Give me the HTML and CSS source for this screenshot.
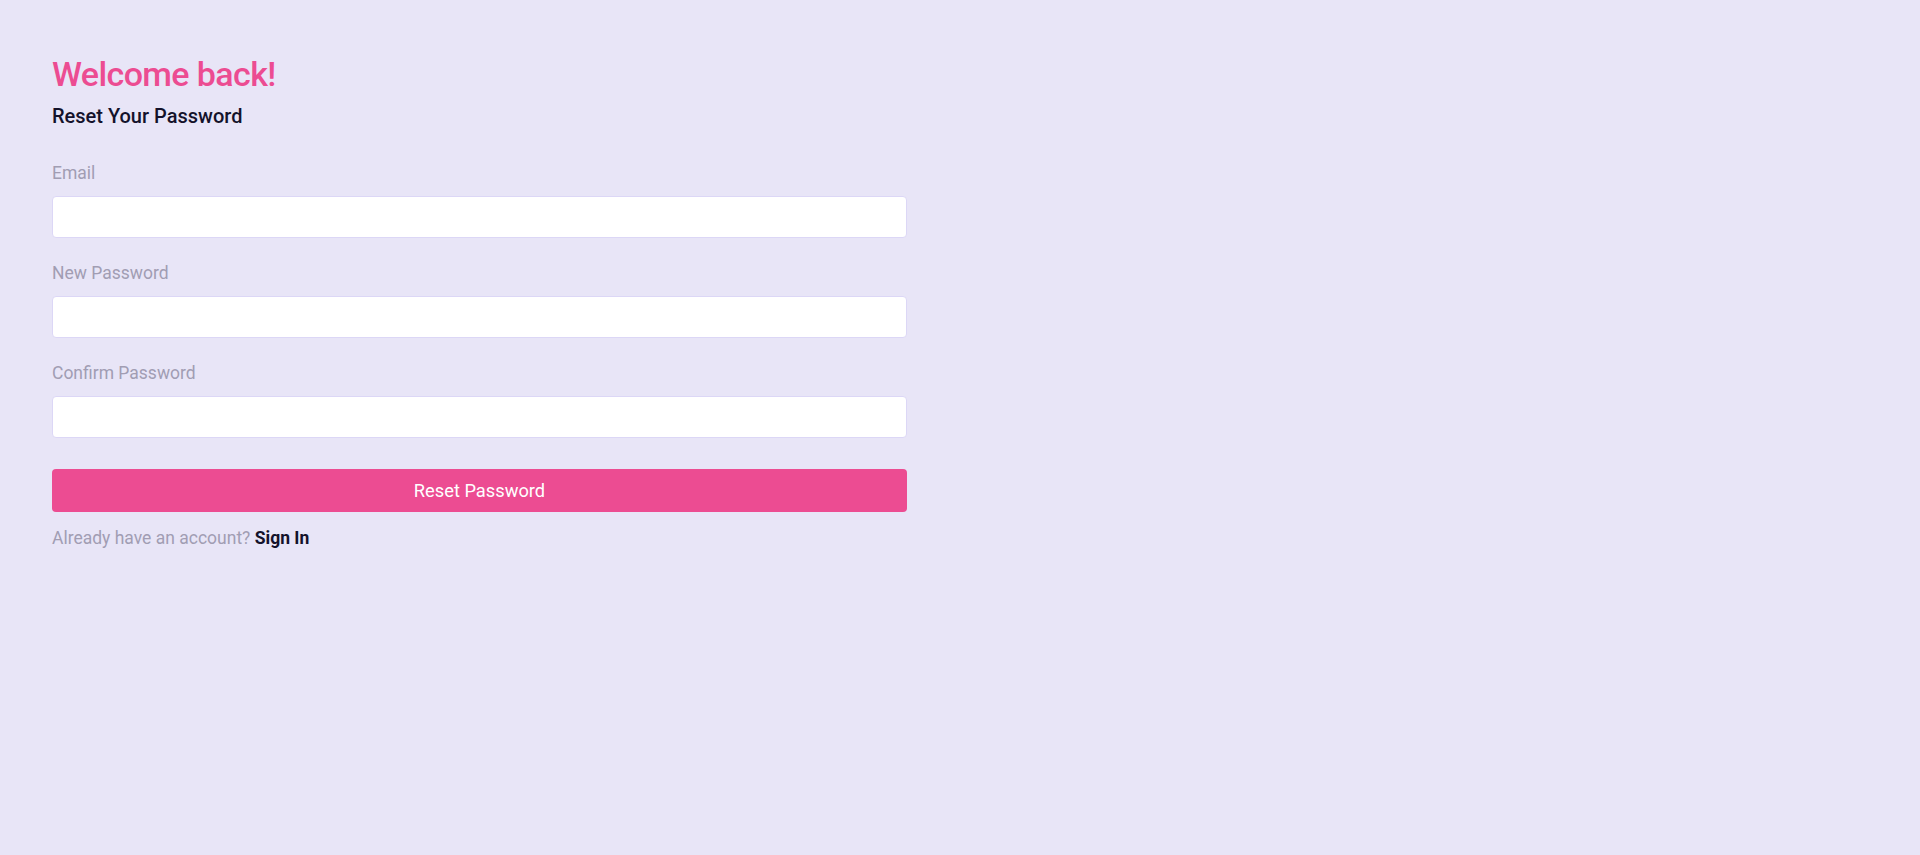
FILE: index.html
```html
<!DOCTYPE html>
<html lang="en">
<head>
<meta charset="utf-8">
<title>Reset Password</title>
<link rel="stylesheet" href="styles.css">
</head>
<body>
<main class="page">
  <form class="form">
    <h1 class="title">Welcome back!</h1>
    <h2 class="subtitle">Reset Your Password</h2>
    <div class="field">
      <label class="label" for="email">Email</label>
      <input class="input" id="email" type="email">
    </div>
    <div class="field">
      <label class="label" for="newpw">New Password</label>
      <input class="input" id="newpw" type="password">
    </div>
    <div class="field">
      <label class="label" for="confirmpw">Confirm Password</label>
      <input class="input" id="confirmpw" type="password">
    </div>
    <button class="button" type="button">Reset Password</button>
    <p class="footer">Already have an account? <a class="link" href="#">Sign In</a></p>
  </form>
</main>
</body>
</html>
```
FILE: styles.css
```css
html, body {
  margin: 0;
  padding: 0;
  height: 100%;
}
body {
  background: #e8e5f7;
  font-family: Roboto, "Liberation Sans", sans-serif;
}
.page {
  padding: 53px 52px 0;
}
.form {
  width: 855px;
  display: flex;
  flex-direction: column;
}
.title {
  margin: 0;
  font-size: 34px;
  line-height: 43px;
  font-weight: 500;
  color: #ec4c92;
  letter-spacing: -0.6px;
}
.subtitle {
  margin: 6px 0 0;
  font-size: 20px;
  line-height: 28px;
  font-weight: 500;
  color: #14122b;
}
.field {
  display: flex;
  flex-direction: column;
  margin-top: 22px;
}
.subtitle + .field {
  margin-top: 30px;
}
.label {
  font-size: 17.5px;
  line-height: 26px;
  color: #a19db3;
  margin-bottom: 10px;
}
.input {
  box-sizing: border-box;
  height: 42px;
  margin: 0;
  border: 1px solid #dcd7f6;
  border-radius: 4px;
  background: #ffffff;
  font: inherit;
  padding: 0 12px;
  outline: none;
}
.button {
  margin-top: 31px;
  height: 43px;
  border: none;
  border-radius: 4px;
  background: #ec4c92;
  color: #ffffff;
  font-family: inherit;
  font-size: 18.3px;
  font-weight: 400;
  cursor: pointer;
}
.footer {
  margin: 13px 0 0;
  font-size: 17.5px;
  line-height: 26px;
  color: #a19db3;
}
.link {
  color: #14122b;
  font-weight: 700;
  text-decoration: none;
}
```
